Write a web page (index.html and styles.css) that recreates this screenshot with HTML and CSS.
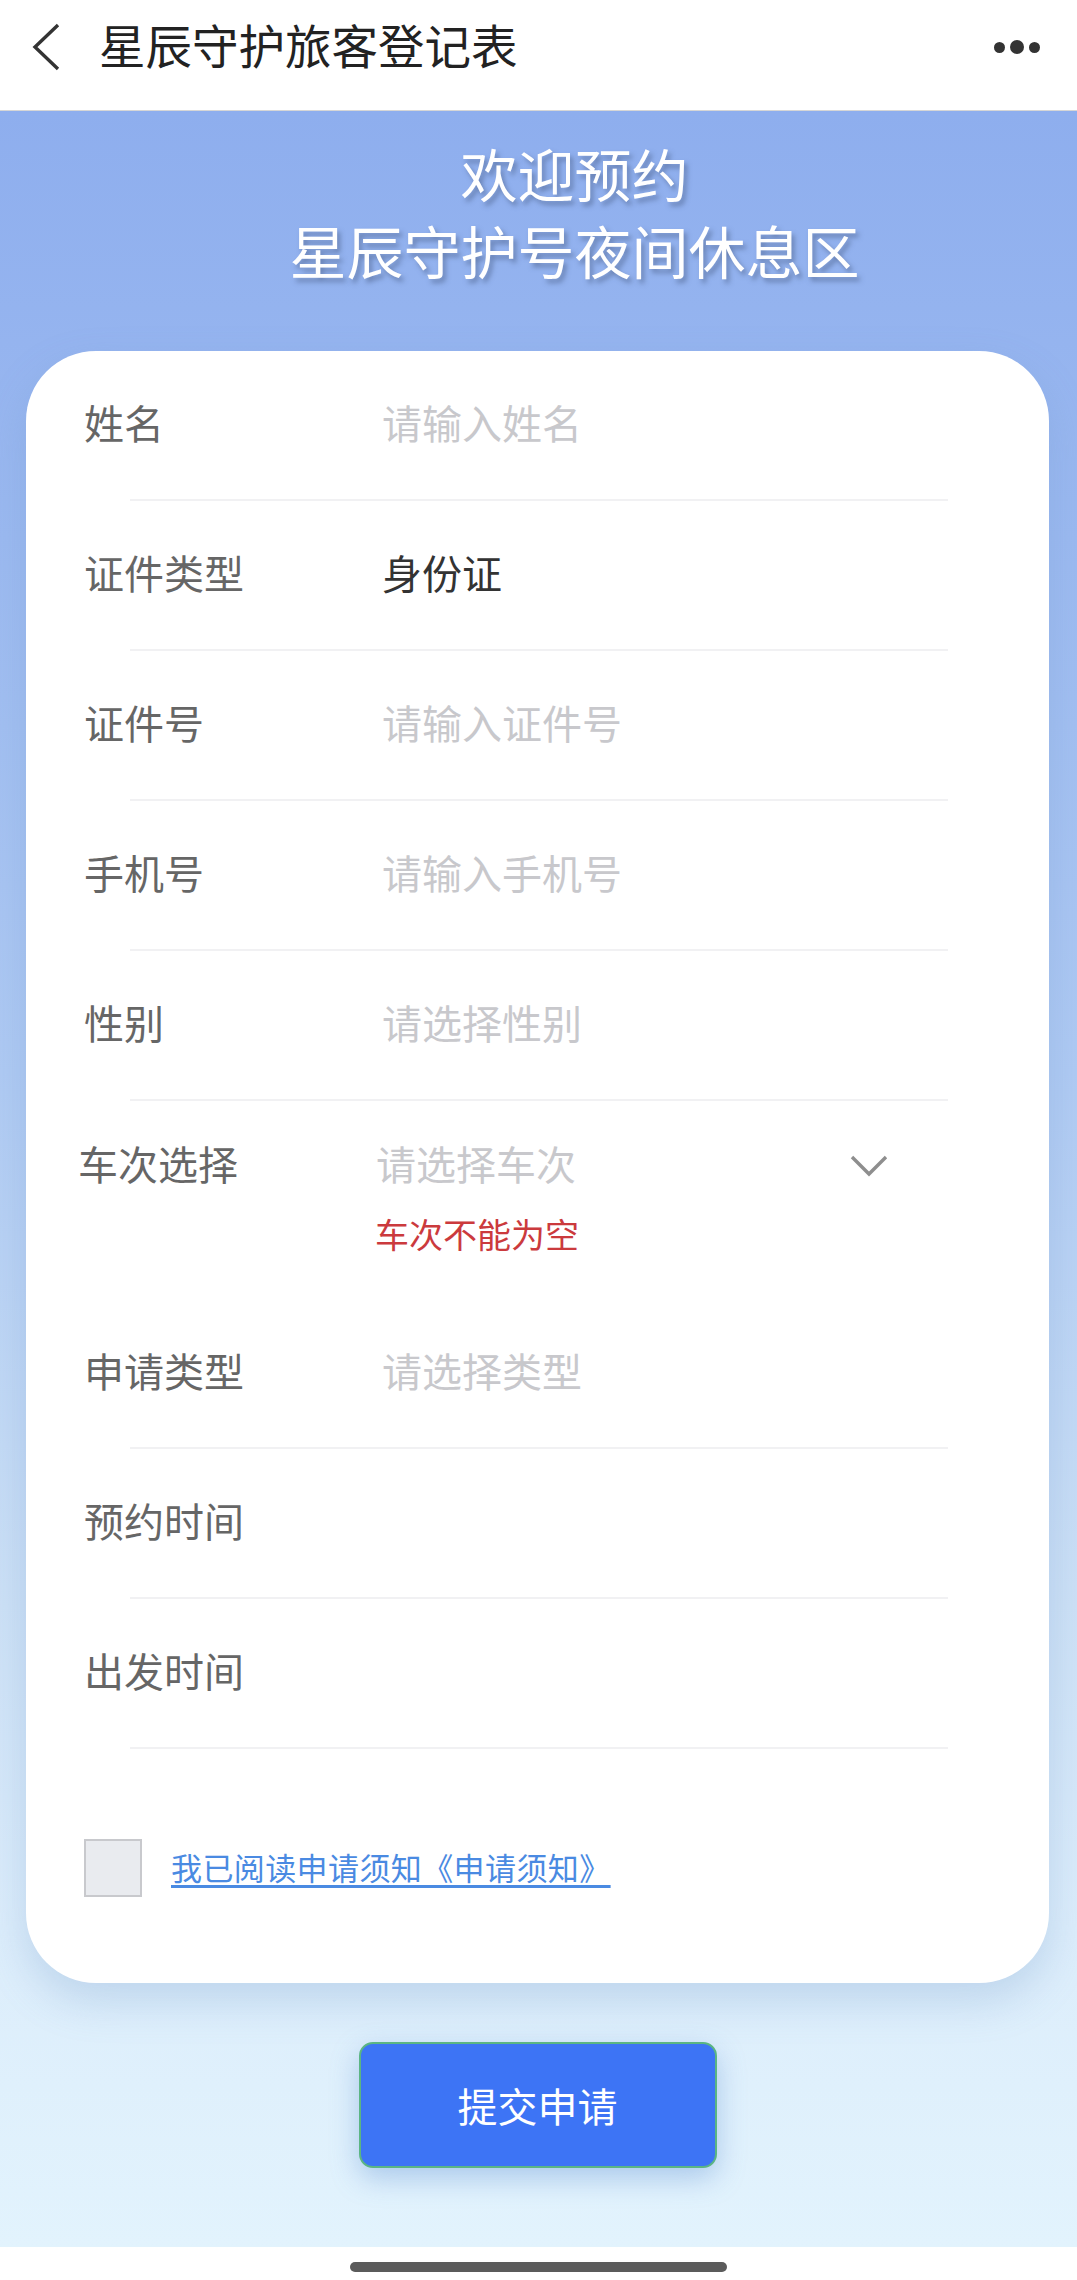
FILE: index.html
```html
<!DOCTYPE html>
<html lang="zh-CN">
<head>
    <meta charset="UTF-8">
    <meta name="viewport" content="width=device-width, initial-scale=1.0">
    <title>星辰守护旅客登记表</title>
    <link rel="stylesheet" href="styles.css">
</head>
<body>

<div class="nav-bar">
    <svg class="nav-back" width="30" height="48" viewBox="0 0 30 48">
        <polyline points="27,2 4,24 27,46" fill="none" stroke="#333" stroke-width="3.4"/>
    </svg>
    <div class="nav-title">星辰守护旅客登记表</div>
    <div class="nav-more">
        <span class="dot"></span><span class="dot dot-mid"></span><span class="dot"></span>
    </div>
</div>

<div class="page">
    <div class="hero">
        <div>欢迎预约</div>
        <div>星辰守护号夜间休息区</div>
    </div>

    <div class="form-card">
        <div class="form-row">
            <span class="form-label">姓名</span>
            <span class="form-value placeholder">请输入姓名</span>
        </div>
        <div class="form-row">
            <span class="form-label">证件类型</span>
            <span class="form-value">身份证</span>
        </div>
        <div class="form-row">
            <span class="form-label">证件号</span>
            <span class="form-value placeholder">请输入证件号</span>
        </div>
        <div class="form-row">
            <span class="form-label">手机号</span>
            <span class="form-value placeholder">请输入手机号</span>
        </div>
        <div class="form-row">
            <span class="form-label">性别</span>
            <span class="form-value placeholder">请选择性别</span>
        </div>

        <div class="select-row">
            <div class="select-line">
                <span class="select-label">车次选择</span>
                <span class="select-value placeholder">请选择车次</span>
                <svg class="select-arrow" width="38" height="22" viewBox="0 0 38 22">
                    <polyline points="2,2 19,19 36,2" fill="none" stroke="#8e8e8e" stroke-width="3.4"/>
                </svg>
            </div>
            <div class="select-error">车次不能为空</div>
        </div>

        <div class="form-row">
            <span class="form-label">申请类型</span>
            <span class="form-value placeholder">请选择类型</span>
        </div>
        <div class="form-row">
            <span class="form-label">预约时间</span>
        </div>
        <div class="form-row">
            <span class="form-label">出发时间</span>
        </div>

        <div class="agree">
            <span class="agree-box"></span>
            <a class="agree-link" href="#">我已阅读申请须知《申请须知》</a>
        </div>
    </div>

    <div class="submit-wrap">
        <button class="submit-btn">提交申请</button>
    </div>
</div>

<div class="home-area">
    <div class="home-bar"></div>
</div>

</body>
</html>
```

FILE: styles.css
```css
body {
    margin: 0;
    width: 1077px;
    height: 2280px;
    overflow: hidden;
    background-color: #ffffff;
    font-family: "Noto Sans CJK SC", "Noto Sans", sans-serif;
    color: #333333;
}

.nav-bar {
    height: 110px;
    border-bottom: 1px solid #d6d6d6;
    background-color: #ffffff;
    display: flex;
    align-items: center;
    padding: 0 37px 0 31px;
}

.nav-back {
    display: block;
    margin-top: -16px;
}

.nav-title {
    margin-left: 38px;
    margin-top: -22px;
    font-size: 46.5px;
    line-height: 60px;
    color: #222222;
}

.nav-more {
    margin-left: auto;
    margin-top: -16px;
    display: flex;
    align-items: center;
    gap: 5px;
}

.dot {
    width: 11px;
    height: 11px;
    border-radius: 50%;
    background-color: #333333;
}

.dot-mid {
    width: 14px;
    height: 14px;
}

.page {
    height: 2136px;
    background: linear-gradient(180deg, #8eaeee 0%, #9bb9f0 20%, #afcaf3 45%, #cde1f6 70%, #dcedfb 85%, #e2f3fd 100%);
    overflow: hidden;
}

.hero {
    padding: 23px 0 0 72px;
    height: 189px;
    text-align: center;
    font-size: 57px;
    line-height: 77px;
    color: #ffffff;
    text-shadow: 3px 4px 5px rgba(70, 90, 130, 0.55);
}

.form-card {
    margin: 28px 28px 0 26px;
    height: 1632px;
    box-sizing: border-box;
    background-color: #ffffff;
    border-radius: 70px;
    box-shadow: 0 18px 40px rgba(110, 150, 200, 0.28);
}

.form-row {
    height: 150px;
    box-sizing: border-box;
    padding-bottom: 8px;
    display: flex;
    align-items: center;
    font-size: 40px;
    background: linear-gradient(#f1f1f3, #f1f1f3) no-repeat 104px 100% / calc(100% - 205px) 2px;
}

.form-label {
    width: 298px;
    padding-left: 58px;
    color: #666666;
}

.form-value {
    color: #333333;
}

.placeholder {
    color: #c8c8cc;
}

.select-row {
    height: 198px;
    padding-top: 37px;
    box-sizing: border-box;
    font-size: 40px;
}

.select-line {
    display: flex;
    align-items: center;
    height: 50px;
}

.select-label {
    width: 298px;
    padding-left: 52px;
    color: #666666;
}

.select-value {
    width: 474px;
}

.select-arrow {
    display: block;
    margin-top: 6px;
}

.select-error {
    margin: 26px 0 0 349px;
    font-size: 34px;
    line-height: 40px;
    color: #cb3a3d;
}

.agree {
    display: flex;
    align-items: center;
    margin-top: 90px;
    padding-left: 58px;
}

.agree-box {
    width: 54px;
    height: 54px;
    border: 2px solid #c8c9cd;
    background-color: #e9ebef;
}

.agree-link {
    margin-left: 29px;
    margin-top: -3px;
    font-size: 31px;
    letter-spacing: 0.4px;
    line-height: 44px;
    color: #4a8ae2;
    text-decoration: underline;
    text-decoration-thickness: 3px;
    text-underline-offset: 5px;
}

.submit-wrap {
    display: flex;
    justify-content: center;
    padding-top: 59px;
}

.submit-btn {
    width: 358px;
    height: 126px;
    margin-left: -2px;
    border: 2px solid #5bb583;
    border-radius: 14px;
    background-color: #3d74f5;
    color: #ffffff;
    font-family: "Noto Sans CJK SC", "Noto Sans", sans-serif;
    font-size: 40px;
    box-shadow: 0 10px 28px rgba(90, 140, 210, 0.4);
}

.home-area {
    height: 33px;
    display: flex;
    justify-content: center;
    padding-top: 15px;
    box-sizing: border-box;
}

.home-bar {
    width: 377px;
    height: 10px;
    border-radius: 5px;
    background-color: #5b5b5b;
}
```
